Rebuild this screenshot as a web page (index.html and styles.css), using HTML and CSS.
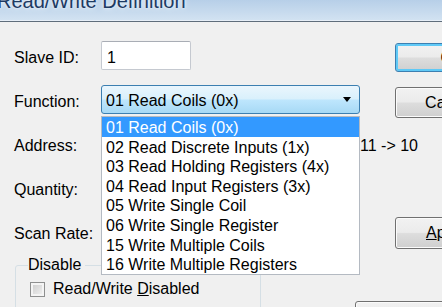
FILE: index.html
```html
<!DOCTYPE html>
<html lang="en">
<head>
    <meta charset="UTF-8">
    <title>Read/Write Definition</title>
    <link rel="stylesheet" href="styles.css">
</head>
<body>
<div class="window">
    <div class="titlebar">
        <div class="title">Read/Write Definition</div>
    </div>

    <div class="dialog">
        <div class="form">
            <div class="fields">
                <label class="label">Slave ID:</label>
                <div class="field"><div class="textbox">1</div></div>
                <div></div>

                <label class="label">Function:</label>
                <div class="field combo-wrap">
                    <div class="combo">
                        <span>01 Read Coils (0x)</span>
                        <span class="arrow"></span>
                    </div>
                    <ul class="droplist">
                        <li class="selected">01 Read Coils (0x)</li>
                        <li>02 Read Discrete Inputs (1x)</li>
                        <li>03 Read Holding Registers (4x)</li>
                        <li>04 Read Input Registers (3x)</li>
                        <li>05 Write Single Coil</li>
                        <li>06 Write Single Register</li>
                        <li>15 Write Multiple Coils</li>
                        <li>16 Write Multiple Registers</li>
                    </ul>
                </div>
                <div></div>

                <label class="label">Address:</label>
                <div class="field"><div class="textbox"></div></div>
                <div class="note">11 -&gt; 10</div>

                <label class="label">Quantity:</label>
                <div class="field"><div class="textbox"></div></div>
                <div></div>

                <label class="label">Scan Rate:</label>
                <div class="field"><div class="textbox"></div></div>
                <div></div>
            </div>

            <fieldset class="group">
                <legend>Disable</legend>
                <label class="check">
                    <span class="box"></span>
                    <span>Read/Write <u>D</u>isabled</span>
                </label>
            </fieldset>
        </div>

        <div class="side">
            <button class="btn default">OK</button>
            <button class="btn cancel">Cancel</button>
            <button class="btn apply"><u>A</u>pply</button>
            <button class="btn lower"></button>
        </div>
    </div>
</div>
</body>
</html>
```

FILE: styles.css
```css
body {
    margin: 0;
    width: 442px;
    height: 307px;
    overflow: hidden;
    background: #f0f0f0;
    font-family: "Liberation Sans", Arial, sans-serif;
    font-size: 16px;
    color: #000;
}

.window {
    width: 442px;
    height: 307px;
    overflow: hidden;
}

/* title bar, only the bottom of it shows */
.titlebar {
    height: 21px;
    overflow: hidden;
    background: linear-gradient(#b7cfe8, #d3e3f2);
    border-bottom: 1px solid #5f6d7b;
    box-shadow: inset 0 -1px 0 #e6eef7;
}

.title {
    margin-top: -9px;
    margin-left: -3px;
    font-size: 20px;
    line-height: 20px;
    color: #1d3a63;
    text-shadow: 0 0 6px #eef5fc, 0 0 3px #eef5fc;
    white-space: nowrap;
}

.dialog {
    display: flex;
    width: 442px;
}

.form {
    width: 381px;
    flex-shrink: 0;
    padding: 19px 0 0 14px;
    box-sizing: border-box;
}

.fields {
    display: grid;
    grid-template-columns: 87px 259px auto;
    grid-template-rows: 29px 29px 29px 29px 29px;
    row-gap: 15px;
}

.label {
    align-self: center;
    padding-top: 5px;
    white-space: nowrap;
}

.note {
    align-self: center;
    padding-top: 4px;
    white-space: nowrap;
}

.field {
    display: flex;
}

.textbox {
    width: 90px;
    height: 29px;
    box-sizing: border-box;
    background: #fff;
    border: 1px solid #c5c9d0;
    border-top-color: #a9adb5;
    border-radius: 2px;
    padding: 6px 5px 0;
    line-height: 20px;
}

.combo-wrap {
    position: relative;
}

.combo {
    width: 259px;
    height: 29px;
    box-sizing: border-box;
    display: flex;
    align-items: center;
    justify-content: space-between;
    padding: 3px 8px 0 4px;
    border: 1px solid #3c7fb1;
    border-radius: 3px;
    background: linear-gradient(#eaf6fd 0%, #d9f0fc 48%, #bee6fd 52%, #a7d9f5 100%);
}

.arrow {
    width: 0;
    height: 0;
    margin-top: -3px;
    border-left: 4.5px solid transparent;
    border-right: 4.5px solid transparent;
    border-top: 5px solid #000;
}

.droplist {
    position: absolute;
    top: 31px;
    left: 0;
    z-index: 10;
    width: 259px;
    box-sizing: border-box;
    margin: 0;
    padding: 0;
    list-style: none;
    background: #fff;
    border: 1px solid #b4bac2;
}

.droplist li {
    height: 19.6px;
    box-sizing: border-box;
    padding: 2px 0 0 4px;
    line-height: 18px;
    white-space: nowrap;
}

.droplist .selected {
    background: #3399ff;
    color: #fff;
}

.group {
    margin: 10px 0 0 1px;
    width: 246px;
    height: 80px;
    box-sizing: border-box;
    padding: 6px 0 0 14px;
    border: 1px solid #d5dfe5;
    border-radius: 3px;
}

.group legend {
    margin-left: -2px;
    padding: 0 4px 0 0;
    line-height: 18px;
}

.check {
    display: flex;
    align-items: center;
    white-space: nowrap;
}

.box {
    width: 15px;
    height: 15px;
    box-sizing: border-box;
    margin-right: 8px;
    border: 1px solid #8e8f8f;
    background: linear-gradient(135deg, #c9c9c9, #f4f4f4);
    box-shadow: inset 0 0 0 2px #f4f4f4;
}

.side {
    flex-shrink: 0;
    width: 120px;
    padding-top: 21px;
    margin-left: 14px;
    display: flex;
    flex-direction: column;
}

.btn {
    width: 110px;
    height: 30px;
    padding: 0;
    font-family: inherit;
    font-size: 16px;
    color: #000;
    border: 1px solid #707070;
    border-radius: 3px;
    background: linear-gradient(#f2f2f2 0%, #ebebeb 48%, #dddddd 52%, #cfcfcf 100%);
    box-shadow: inset 0 0 0 1px #fbfbfb;
}

.btn.default {
    height: 29px;
    padding-left: 4px;
    border-color: #3c7fb1;
    box-shadow: inset 0 0 0 2px #5fc9f6;
}

.btn.cancel {
    margin-top: 15px;
    height: 31px;
}

.btn.apply {
    margin-top: 99px;
    height: 32px;
    padding-right: 8px;
}

.btn.lower {
    margin-top: 52px;
    margin-left: -40px;
    width: 120px;
}
```
